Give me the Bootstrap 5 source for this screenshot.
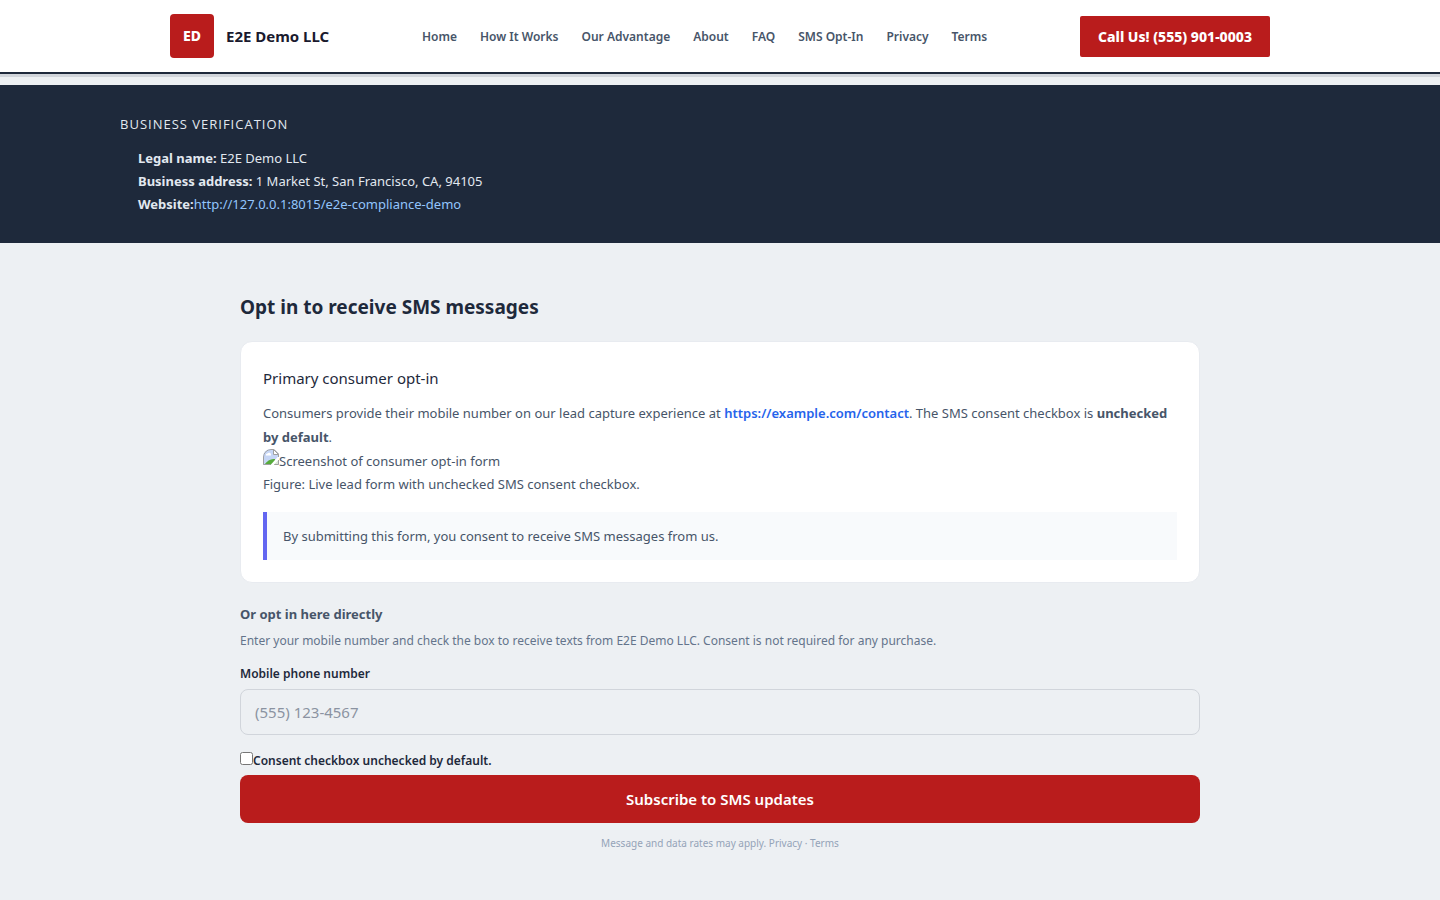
<!DOCTYPE html>
<html lang="en">
<head>
<meta charset="utf-8">
<meta name="viewport" content="width=device-width, initial-scale=1">
<title>E2E Demo LLC - SMS Opt-In</title>
<link href="https://cdn.jsdelivr.net/npm/bootstrap@5.3.0/dist/css/bootstrap.min.css" rel="stylesheet">
<style>
  body { font-family: "Segoe UI", "Noto Sans", "Open Sans", sans-serif; font-size: 14px; line-height: 24px; color: #1e293b; background: #edf0f3; }
  a { text-decoration: none; }
  .site-header { background: #fff; border-bottom: 2px solid #1e293b; box-shadow: 0 3px 0 #d1d5db; margin-bottom: 11px; }
  .header-inner { max-width: 1148px; padding: 14px 24px; }
  .logo-tile { width: 44px; height: 44px; border-radius: 4px; background: #b91c1c; color: #fff; font-size: 14px; font-weight: 800; }
  .brand-name { font-size: 15px; font-weight: 700; color: #1a1a2e; }
  .site-links { gap: 4px 23px; padding-top: 2px; }
  .site-links a { font-size: 12px; font-weight: 600; color: #475569; }
  .call-link { background: #b91c1c; color: #fff; font-size: 14px; font-weight: 800; line-height: 21px; padding: 10px 18px; border-radius: 2px; }
  .verify { background: #1e293b; color: #e2e8f0; padding: 28px 0 27px; }
  .verify-inner { max-width: 1200px; }
  .verify h2 { font-family: "Segoe UI", "Open Sans", sans-serif; font-size: 13px; font-weight: 400; line-height: 22px; letter-spacing: 1px; margin-bottom: 12px; }
  .verify ul { padding-left: 18px; margin-bottom: 0; font-size: 13px; line-height: 23px; }
  .verify a { color: #93c5fd; }
  .page-main { max-width: 960px; padding: 48px 0; }
  .page-main h1 { font-size: 19px; font-weight: 700; line-height: 32px; margin-bottom: 18px; }
  .optin-card { background: #fff; border: 1px solid #e8ebf0; border-radius: 12px; padding: 22px; margin-bottom: 20px; color: #475569; font-size: 13px; }
  .optin-card h2 { font-size: 15px; font-weight: 400; line-height: 28px; margin-bottom: 9px; color: #1e293b; }
  .optin-card a { color: #2563eb; font-weight: 600; }
  .optin-card figcaption { line-height: 23px; }
  .missing-shot { flex: none; align-self: flex-start; }
  .consent-quote { background: #f8fafc; border-left: 4px solid #6366f1; padding: 12px 16px; margin: 16px 0 0; }
  .direct-title { font-size: 13px; font-weight: 700; line-height: 22px; color: #475569; margin-bottom: 6px; }
  .direct-note { font-size: 12px; line-height: 20px; color: #64748b; margin-bottom: 12px; }
  .field-label { font-size: 12px; font-weight: 600; line-height: 22px; }
  .phone-field { background: transparent; border: 1px solid #d1d5db; border-radius: 8px; font-size: 15px; line-height: 24px; padding: 10px 14px; }
  .phone-field::placeholder { color: #8b93a1; }
  .consent-row { margin: 15px 0 3px; }
  .consent-row input { width: 13px; height: 13px; margin: 2px 0 0; }
  .subscribe-btn { background: #b91c1c; color: #fff; font-size: 15px; font-weight: 600; line-height: 24px; padding: 12px; border: 0; border-radius: 8px; }
  .subscribe-btn:hover { background: #991b1b; color: #fff; }
  .fine-print { font-size: 10px; line-height: 16px; color: #94a3b8; margin: 12px 0 0; }
  .fine-print a { color: inherit; }
</style>
</head>
<body>
<header class="site-header">
  <div class="header-inner mx-auto d-flex flex-wrap align-items-center justify-content-between">
    <a href="#" class="d-flex align-items-center">
      <span class="logo-tile d-flex align-items-center justify-content-center me-2">ED</span>
      <span class="brand-name ms-1">E2E Demo LLC</span>
    </a>
    <nav class="site-links d-flex flex-wrap" aria-label="Main">
      <a href="#">Home</a><a href="#">How It Works</a><a href="#">Our Advantage</a><a href="#">About</a><a href="#">FAQ</a><a href="#">SMS Opt-In</a><a href="#">Privacy</a><a href="#">Terms</a>
    </nav>
    <a href="tel:+15559010003" class="call-link">Call Us! (555) 901-0003</a>
  </div>
</header>

<section class="verify">
  <div class="verify-inner mx-auto">
    <h2 class="text-uppercase">Business verification</h2>
    <ul class="list-unstyled">
      <li><strong>Legal name:</strong> E2E Demo LLC</li>
      <li><strong>Business address:</strong> 1 Market St, San Francisco, CA, 94105</li>
      <li><strong>Website:</strong><a href="#">http://127.0.0.1:8015/e2e-compliance-demo</a></li>
    </ul>
  </div>
</section>

<main class="page-main mx-auto">
  <h1>Opt in to receive SMS messages</h1>

  <section class="optin-card">
    <h2>Primary consumer opt-in</h2>
    <p class="mb-0">Consumers provide their mobile number on our lead capture experience at <a href="#">https://example.com/contact</a>. The SMS consent checkbox is <strong>unchecked by default</strong>.</p>
    <figure class="mb-0">
      <div class="d-flex">
        <svg class="missing-shot" width="16" height="16" viewBox="0 0 16 16" aria-hidden="true">
          <defs><clipPath id="shotCorner"><path d="M16 0v16H0V8a8 8 0 0 1 8-8z"/></clipPath></defs>
          <g clip-path="url(#shotCorner)">
            <path d="M0 0h11l5 5v11H0z" fill="#c6d6f6"/>
            <path d="M3 6.500a1.500 1.500 0 0 1 1.500-2 2 2 0 0 1 3.500 1v1z" fill="#fff"/>
            <path d="M1 16q5-7 11-6v6z" fill="#57ab3c"/>
            <path d="M16 6.500L7.500 16H11l5-5.500z" fill="#fff"/>
            <path d="M11 15.500l4.500-4.500v4.500z" fill="#dbe8d2"/>
            <path d="M7.500 15.500H.5V8A7.500 7.500 0 0 1 8 .5h3l4.500 4.500v3M11.500 15.500h4V11" fill="none" stroke="#a0a0a0"/>
            <path d="M10.500 .5V5.500h5z" fill="#fff" stroke="#a0a0a0"/>
          </g>
        </svg>
        <span>Screenshot of consumer opt-in form</span>
      </div>
      <figcaption>Figure: Live lead form with unchecked SMS consent checkbox.</figcaption>
    </figure>
    <blockquote class="consent-quote">By submitting this form, you consent to receive SMS messages from us.</blockquote>
  </section>

  <h2 class="direct-title">Or opt in here directly</h2>
  <p class="direct-note">Enter your mobile number and check the box to receive texts from E2E Demo LLC. Consent is not required for any purchase.</p>
  <form>
    <label class="field-label d-block mb-1" for="phone">Mobile phone number</label>
    <input class="phone-field form-control" type="tel" id="phone" placeholder="(555) 123-4567">
    <div class="consent-row d-flex align-items-start">
      <input type="checkbox" id="consent">
      <label class="field-label" for="consent">Consent checkbox unchecked by default.</label>
    </div>
    <button class="subscribe-btn btn w-100" type="button">Subscribe to SMS updates</button>
  </form>
  <p class="fine-print text-center">Message and data rates may apply. <a href="#">Privacy</a> · <a href="#">Terms</a></p>
</main>
<script src="https://cdn.jsdelivr.net/npm/bootstrap@5.3.0/dist/js/bootstrap.bundle.min.js"></script>
</body>
</html>
